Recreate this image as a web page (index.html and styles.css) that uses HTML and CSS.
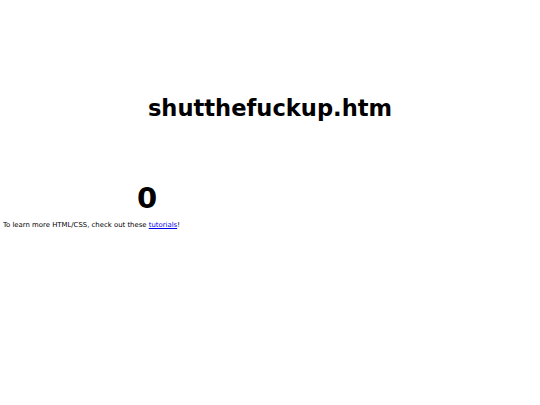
FILE: index.html
```html
<!DOCTYPE html>
<html lang="en">
<head>
  <meta charset="UTF-8">
  <title>shutthefuckup.htm</title>
  <link rel="stylesheet" href="styles.css">
</head>
<body>
  <h1 class="title">shutthefuckup.htm</h1>
  <div class="counter">0</div>
  <p class="note">To learn more HTML/CSS, check out these <a href="#">tutorials</a>!</p>
</body>
</html>
```

FILE: styles.css
```css
body {
  margin: 0;
  padding: 0 3px;
  background: #fff;
  color: #000;
}
.title {
  font-family: "Comic Sans MS", "DejaVu Sans", sans-serif;
  font-size: 22.6px;
  font-weight: bold;
  text-align: center;
  margin: 90px 0 0;
  line-height: 36px;
}
.counter {
  font-family: "Comic Sans MS", "DejaVu Sans", sans-serif;
  font-size: 29px;
  font-weight: bold;
  width: 288px;
  text-align: center;
  margin-top: 54px;
  line-height: 36px;
}
.note {
  font-family: Verdana, "DejaVu Sans", sans-serif;
  font-size: 6.9px;
  margin: 5px 0 0;
}
.note a {
  color: #00e;
}
```
